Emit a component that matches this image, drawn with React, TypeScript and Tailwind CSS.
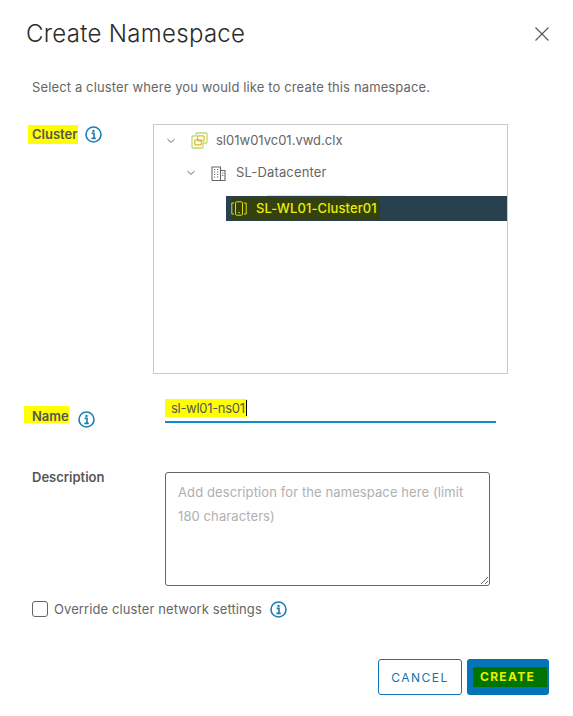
import React from "react";

const font = { fontFamily: '"Inter","Noto Sans",sans-serif' };

function Info({ className = "" }: { className?: string }) {
  return (
    <svg width="17" height="17" viewBox="0 0 17 17" className={className} fill="none">
      <circle cx="8.5" cy="8.5" r="7.5" stroke="#1a7fb5" strokeWidth="1.6" />
      <circle cx="8.5" cy="4.9" r="1.2" fill="#1a7fb5" />
      <path d="M6.6 7.4h2.4v4.6M6.4 12.4h4.4" stroke="#1a7fb5" strokeWidth="1.6" />
    </svg>
  );
}

function Chevron() {
  return (
    <svg width="10" height="6" viewBox="0 0 10 6" fill="none">
      <path d="M1.500 1.200l3.500 3.200 3.500-3.200" stroke="#666" strokeWidth="1" />
    </svg>
  );
}

function VCenter() {
  return (
    <svg width="17" height="17" viewBox="0 0 17 17" fill="none">
      <path d="M5 4V2a1 1 0 0 1 1-1h9a1 1 0 0 1 1 1v8a1 1 0 0 1-1 1h-3v4a1 1 0 0 1-1 1H2a1 1 0 0 1-1-1V5a1 1 0 0 1 1-1z" stroke="#b9dc6e" strokeWidth="1.3" strokeLinejoin="round" />
      <rect x="6.500" y="3.800" width="6.500" height="5" rx="0.500" stroke="#e6b61e" strokeWidth="1.200" />
      <rect x="3.800" y="7.800" width="6.500" height="5" rx="0.500" stroke="#e6b61e" strokeWidth="1.200" />
    </svg>
  );
}

function Datacenter() {
  return (
    <svg width="15" height="15" viewBox="0 0 15 15" fill="none">
      <path d="M1 14.500V1h8.500v13.500M9.500 4.500h4.500v10H1" stroke="#666" strokeWidth="1.100" />
      <path d="M3 3.500h1.200M6 3.500h1.200M3 6h1.200M6 6h1.200M3 8.500h1.200M6 8.500h1.200M3 11h1.200M6 11h1.200M11.200 7h1.200M11.200 9.500h1.200" stroke="#666" strokeWidth="1" />
    </svg>
  );
}

function ClusterIcon() {
  return (
    <svg width="16" height="15" viewBox="0 0 16 15" fill="none">
      <rect x="4.500" y="0.800" width="7" height="13.400" rx="1" stroke="#d4df10" strokeWidth="1" />
      <path d="M3 2H0.800v11H3M13 2h2.200v11H13" stroke="#d4df10" strokeWidth="1" />
      <circle cx="8" cy="11.500" r="0.800" fill="#d4df10" />
    </svg>
  );
}

export default function App() {
  return (
    <div style={font} className="w-[573px] h-[716px] bg-white flex flex-col text-[#565656]">
      <div className="flex items-center justify-between pl-[26px] pr-[23px] pt-[19px]">
        <h1 className="text-[24px] leading-[29px] font-light tracking-[0.3px] text-[#2b2b2b]">Create Namespace</h1>
        <svg width="16" height="16" viewBox="0 0 16 16" fill="none">
          <path d="M1.500 1.500l13 13M14.500 1.500l-13 13" stroke="#555" strokeWidth="1.100" />
        </svg>
      </div>

      <p className="pl-[32px] pt-[30px] text-[13px] leading-[18px] tracking-[0.13px] text-[#666]">
        Select a cluster where you would like to create this namespace.
      </p>

      <div className="flex pt-[28px] pl-[28px]">
        <div className="w-[125px] flex items-start gap-[7px] pt-[1px] shrink-0">
          <span className="w-[50px] bg-[#ffff00] px-[4px] text-[13px] leading-[19px] font-semibold text-[#565656]">Cluster</span>
          <Info className="mt-[1px]" />
        </div>
        <div className="w-[355px] h-[250px] border border-[#c9c9c9] flex flex-col pt-[3px]">
          <div className="h-[25px] flex items-center pl-[12px] text-[13px] text-[#666]">
            <Chevron />
            <span className="ml-[15px]"><VCenter /></span>
            <span className="ml-[8px]">sl01w01vc01.vwd.clx</span>
          </div>
          <div className="h-[40px] flex items-center pl-[32px] text-[13px] tracking-[0.15px] text-[#666]">
            <Chevron />
            <span className="ml-[15px]"><Datacenter /></span>
            <span className="ml-[10px]">SL-Datacenter</span>
          </div>
          <div className="ml-[113px] mt-[2px] w-[78px] h-[1px] bg-[#ffff00]" />
          <div className="ml-[72px] h-[25px] bg-[#29414f] flex items-center">
            <div className="ml-[5px] w-[149px] h-[22px] bg-[#35400f] flex items-center rounded-sm">
              <ClusterIcon />
              <span className="ml-[9px] text-[13px] tracking-[0.1px] font-medium text-[#e8f000]">SL-WL01-Cluster01</span>
            </div>
          </div>
        </div>
      </div>

      <div className="flex items-end pt-[25px] pl-[24px]">
        <div className="w-[141px] shrink-0 flex items-end gap-[9px]">
          <span className="bg-[#ffff00] pl-[8px] pt-[3px] text-[13px] leading-[14px] font-semibold text-[#565656]">Name</span>
          <Info className="mb-[-5px]" />
        </div>
        <div className="w-[331px] h-[24px] border-b-2 border-[#0f8dc8] text-[13px] leading-[18px] tracking-[-0.3px] text-[#565656]">
          <span className="inline-block bg-[#ffff00] pl-[6px]">sl-wl01-ns01<span className="border-r border-black ml-[1px]" /></span>
        </div>
      </div>

      <div className="flex pt-[49px] pl-[32px]">
        <div className="w-[133px] shrink-0 text-[13px] leading-[10px] font-semibold">Description</div>
        <textarea
          readOnly
          className="w-[325px] h-[114px] border border-[#666] rounded-[3px] px-[12px] py-[7px] text-[13px] leading-[24px] tracking-[0.1px] placeholder:text-[#b0b0b0] outline-none"
          placeholder="Add description for the namespace here (limit 180 characters)"
        />
      </div>

      <div className="flex items-center pt-[14px] pl-[32px]">
        <span className="w-[16px] h-[16px] border border-[#666] rounded-[3px]" />
        <span className="ml-[6px] text-[13px] leading-[18px] tracking-[0.1px] text-[#666]">Override cluster network settings</span>
        <Info className="ml-[8px]" />
      </div>

      <div className="flex justify-end gap-[5px] pr-[24px] pt-[41px]">
        <button className="w-[84px] h-[36px] border border-[#0f75b0] rounded-[3px] text-[12px] pt-[1px] tracking-[1.5px] font-normal text-[#0f75b0] bg-white">CANCEL</button>
        <button className="w-[82px] h-[36px] bg-[#0474b8] rounded-[3px] flex items-center justify-start pl-[6px]">
          <span className="bg-[#007400] text-[12px] leading-[20px] tracking-[1.3px] font-bold text-[#e8f000] pl-[7px] pr-[12px]">CREATE</span>
        </button>
      </div>
    </div>
  );
}
